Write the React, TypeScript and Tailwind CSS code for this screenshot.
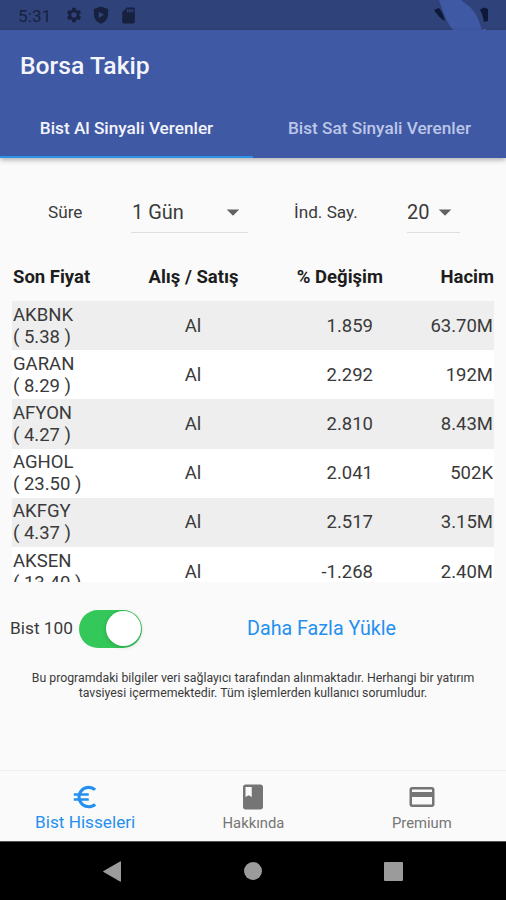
import { useState } from 'react'
import {
  MdArrowDropDown,
  MdBook,
  MdEuroSymbol,
  MdOutlinePayment,
  MdSdCard,
  MdSettings,
} from 'react-icons/md'

interface Stock {
  symbol: string
  price: string
  signal: string
  change: string
  volume: string
}

const STOCKS: Stock[] = [
  { symbol: 'AKBNK', price: '5.38', signal: 'Al', change: '1.859', volume: '63.70M' },
  { symbol: 'GARAN', price: '8.29', signal: 'Al', change: '2.292', volume: '192M' },
  { symbol: 'AFYON', price: '4.27', signal: 'Al', change: '2.810', volume: '8.43M' },
  { symbol: 'AGHOL', price: '23.50', signal: 'Al', change: '2.041', volume: '502K' },
  { symbol: 'AKFGY', price: '4.37', signal: 'Al', change: '2.517', volume: '3.15M' },
  { symbol: 'AKSEN', price: '13.40', signal: 'Al', change: '-1.268', volume: '2.40M' },
]

const TABS = ['Bist Al Sinyali Verenler', 'Bist Sat Sinyali Verenler']

const StatusBar = () => (
  <div className="relative flex h-[30px] shrink-0 items-center bg-[#2f437a] pl-[18px] text-[#17213f]">
    <span className="w-[47px] pt-[2px] text-[17px] leading-none tracking-[0.2px]">5:31</span>
    <MdSettings className="h-[18px] w-[18px]" />
    <svg viewBox="0 0 24 24" className="ml-[9px] h-[18px] w-[18px]" fill="currentColor">
      <path
        fillRule="evenodd"
        d="M12 0.500 2.500 4V11c0 5.900 4 11 9.500 12.500 5.500-1.500 9.500-6.600 9.500-12.500V4L12 .500ZM9 7.500v8.500l7-4.250-7-4.250Z"
      />
    </svg>
    <MdSdCard className="ml-[9px] h-[19px] w-[19px]" />
    <svg viewBox="0 0 80 30" className="absolute top-0 right-0 h-[30px] w-[80px]">
      <path d="M13 0H35Q40 4 44 7 51 14 54 24L56 30H27Q20 22 13 0Z" fill="#4059a5" />
      <path d="M8 10 13 8Q17 13 19 21Q14 19 8 10Z" fill="#0e1838" />
      <path d="M54 9.500 58 7.500 62 9V21L58 22Q57 15 54 9.500Z" fill="#0e1838" />
      <path d="M57.500 29.500v1h2v-1Z" fill="#c98aa6" />
    </svg>
  </div>
)

const App = () => {
  const [tab, setTab] = useState(0)
  const [onlyBist100, setOnlyBist100] = useState(true)

  return (
    <div className="flex h-[900px] w-[506px] flex-col overflow-hidden bg-[#fafafa] font-['Roboto',sans-serif] text-[#3a3a3a]">
      <StatusBar />

      <header className="z-10 flex h-[128px] shrink-0 flex-col bg-[#4059a5] shadow-[0_2px_5px_rgba(0,0,0,0.3)]">
        <h1 className="flex h-[69px] items-center pt-[3px] pl-[20px] text-[24.700px] font-medium text-[#f3f5fb]">
          Borsa Takip
        </h1>
        <nav className="grid flex-1 grid-cols-2">
          {TABS.map((label, i) => (
            <button
              key={label}
              onClick={() => setTab(i)}
              className={
                i === tab
                  ? 'border-b-[2px] border-[#2d93e8] pt-[2px] text-[17.200px] font-medium text-[#f3f5fb]'
                  : 'border-b-[2px] border-transparent pt-[2px] text-[17.200px] font-medium text-[#bcc7e8]'
              }
            >
              {label}
            </button>
          ))}
        </nav>
      </header>

      <div className="flex h-[94px] shrink-0 items-center pt-[16px]">
        <span className="ml-[48px] w-[83px] text-[17.200px]">Süre</span>
        <button className="flex h-[39px] w-[117px] items-center justify-between border-b border-[#dedede] pb-[2px] pl-[1px] text-[20px]">
          1 Gün
          <MdArrowDropDown className="h-[30px] w-[30px] text-[#616161]" />
        </button>
        <span className="ml-[46px] w-[113px] text-[17.200px]">İnd. Say.</span>
        <button className="flex h-[39px] w-[53px] items-center justify-between border-b border-[#dedede] pb-[2px] text-[20px]">
          20
          <MdArrowDropDown className="h-[30px] w-[30px] text-[#616161]" />
        </button>
      </div>

      <div className="mx-[12px] grid h-[49px] shrink-0 grid-cols-[121px_121px_129px_111px] items-center pt-[3px] text-[18.500px] font-bold text-[#1d1d1d]">
        <span className="pl-[1px]">Son Fiyat</span>
        <span className="text-center">Alış / Satış</span>
        <span className="text-right">% Değişim</span>
        <span className="text-right">Hacim</span>
      </div>

      <div className="mx-[12px] h-[281px] shrink-0 overflow-hidden">
        {STOCKS.map(stock => (
          <div
            key={stock.symbol}
            className="grid h-[49.200px] grid-cols-[121px_120px_120px_120px] items-center text-[18.500px] odd:bg-[#eeeeee] even:bg-white"
          >
            <div className="pl-[1px] leading-[22px]">
              <p>{stock.symbol}</p>
              <p>( {stock.price} )</p>
            </div>
            <span className="pt-[2px] text-center">{stock.signal}</span>
            <span className="pt-[2px] text-right">{stock.change}</span>
            <span className="pt-[2px] text-right">{stock.volume}</span>
          </div>
        ))}
      </div>

      <div className="flex h-[93px] shrink-0 items-center">
        <span className="ml-[10px] w-[69px] text-[17.300px]">Bist 100</span>
        <button
          role="switch"
          aria-checked={onlyBist100}
          onClick={() => setOnlyBist100(!onlyBist100)}
          className={
            onlyBist100
              ? 'flex h-[38px] w-[63px] justify-end rounded-full bg-[#34c759] p-[1.500px]'
              : 'flex h-[38px] w-[63px] justify-start rounded-full bg-[#e0e0e0] p-[1.500px]'
          }
        >
          <span className="h-[35px] w-[35px] rounded-full bg-white shadow-[0_1px_4px_rgba(0,0,0,0.2)]" />
        </button>
        <button className="ml-[105px] text-[19.700px] whitespace-nowrap text-[#2590ef]">
          Daha Fazla Yükle
        </button>
      </div>

      <p className="mt-[-4px] shrink-0 text-center text-[12.300px] leading-[15px]">
        Bu programdaki bilgiler veri sağlayıcı tarafından alınmaktadır. Herhangi bir yatırım
        <br />
        tavsiyesi içermemektedir. Tüm işlemlerden kullanıcı sorumludur.
      </p>

      <nav className="mt-auto grid h-[71px] shrink-0 grid-cols-3 border-t border-[#eeeeee] pl-[1px] text-[#757575]">
        <button className="flex flex-col items-center pt-[11px] text-[#2590ef]">
          <MdEuroSymbol className="h-[30px] w-[30px]" />
          <span className="text-[17.200px] leading-[20px]">Bist Hisseleri</span>
        </button>
        <button className="flex flex-col items-center pt-[11px]">
          <MdBook className="h-[30px] w-[30px]" />
          <span className="pt-[1px] text-[14.800px] leading-[20px]">Hakkında</span>
        </button>
        <button className="flex flex-col items-center pt-[11px]">
          <MdOutlinePayment className="h-[30px] w-[30px]" />
          <span className="pt-[1px] text-[14.800px] leading-[20px]">Premium</span>
        </button>
      </nav>

      <div className="flex h-[59px] shrink-0 items-center border-t border-[#555555] bg-black">
        <svg viewBox="0 0 18 21" className="ml-[103px] h-[21px] w-[18px]" fill="#9b9b9b">
          <path d="M17 .5q1-.5 1 .5v19q0 1-1 .5L.5 11q-.6-.5 0-1Z" />
        </svg>
        <span className="ml-[123px] h-[18px] w-[18px] rounded-full bg-[#9b9b9b]" />
        <span className="ml-[122px] h-[19px] w-[19px] rounded-[1px] bg-[#9b9b9b]" />
      </div>
    </div>
  )
}

export default App
